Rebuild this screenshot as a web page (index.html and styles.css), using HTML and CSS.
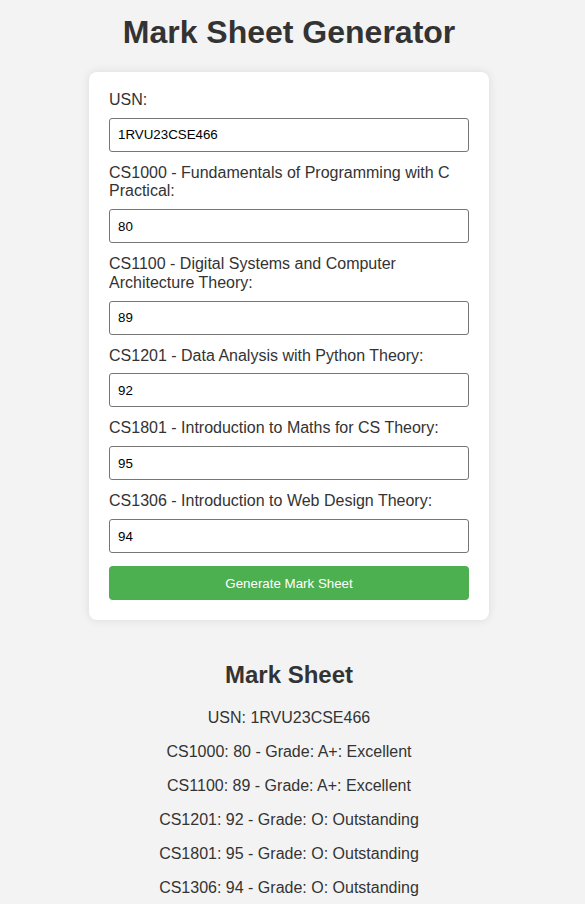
FILE: index.html
```html
<!DOCTYPE html>
<html lang="en">
<head>
<meta charset="UTF-8">
<title>Mark Sheet Generator</title>
<link rel="stylesheet" href="styles.css">
</head>
<body>
  <main class="page">
    <h1 class="title">Mark Sheet Generator</h1>
    <form class="card">
      <label class="field-label" for="usn">USN:</label>
      <input class="field-input" id="usn" type="text" value="1RVU23CSE466">

      <label class="field-label" for="cs1000">CS1000 - Fundamentals of Programming with C Practical:</label>
      <input class="field-input" id="cs1000" type="text" value="80">

      <label class="field-label" for="cs1100">CS1100 - Digital Systems and Computer Architecture Theory:</label>
      <input class="field-input" id="cs1100" type="text" value="89">

      <label class="field-label" for="cs1201">CS1201 - Data Analysis with Python Theory:</label>
      <input class="field-input" id="cs1201" type="text" value="92">

      <label class="field-label" for="cs1801">CS1801 - Introduction to Maths for CS Theory:</label>
      <input class="field-input" id="cs1801" type="text" value="95">

      <label class="field-label" for="cs1306">CS1306 - Introduction to Web Design Theory:</label>
      <input class="field-input" id="cs1306" type="text" value="94">

      <button class="btn" type="button">Generate Mark Sheet</button>
    </form>

    <section class="result">
      <h2 class="result-title">Mark Sheet</h2>
      <p class="result-line">USN: 1RVU23CSE466</p>
      <p class="result-line">CS1000: 80 - Grade: A+: Excellent</p>
      <p class="result-line">CS1100: 89 - Grade: A+: Excellent</p>
      <p class="result-line">CS1201: 92 - Grade: O: Outstanding</p>
      <p class="result-line">CS1801: 95 - Grade: O: Outstanding</p>
      <p class="result-line">CS1306: 94 - Grade: O: Outstanding</p>
    </section>
  </main>
</body>
</html>
```

FILE: styles.css
```css
html, body {
  margin: 0;
  padding: 0;
}

body {
  background: #f3f3f3;
  color: #333;
  font-family: "Liberation Sans", Arial, sans-serif;
  font-size: 16px;
}

.page {
  display: flex;
  flex-direction: column;
  align-items: center;
  padding-right: 7px;
}

.title {
  margin: 14px 0 21px;
  font-size: 32px;
  font-weight: bold;
  line-height: normal;
}

.card {
  box-sizing: border-box;
  width: 400px;
  background: #fff;
  border-radius: 8px;
  box-shadow: 0 0 10px rgba(0, 0, 0, 0.1);
  padding: 19px 20px 20px;
  display: flex;
  flex-direction: column;
}

.field-label {
  display: block;
  margin-bottom: 8.5px;
  line-height: 18.4px;
}

.field-input {
  box-sizing: border-box;
  width: 100%;
  height: 34px;
  margin: 0 0 12px;
  padding: 0 8px;
  border: 1px solid #767676;
  border-radius: 3px;
  background: #fff;
  color: #000;
  font-family: "Liberation Sans", Arial, sans-serif;
  font-size: 13.33px;
}

.btn {
  box-sizing: border-box;
  width: 100%;
  height: 34px;
  margin-top: 1px;
  border: none;
  border-radius: 4px;
  background: #4caf50;
  color: #fff;
  font-family: "Liberation Sans", Arial, sans-serif;
  font-size: 13.33px;
  cursor: pointer;
}

.result {
  margin-top: 41px;
  text-align: center;
}

.result-title {
  margin: 0 0 20px;
  font-size: 24px;
  font-weight: bold;
  line-height: normal;
}

.result-line {
  margin: 0 0 16px;
  line-height: 18px;
}
```
